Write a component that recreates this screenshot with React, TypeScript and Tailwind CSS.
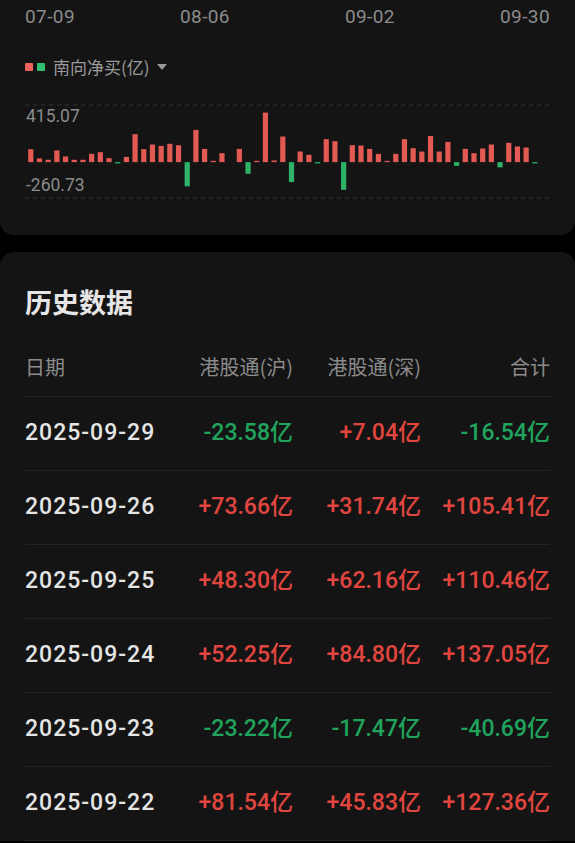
import React from "react";

const NUM_FONT = "font-['Roboto','Noto_Sans_CJK_SC',sans-serif]";

// 南向净买 daily values (亿), oldest first
const FLOWS = [
  94, 27, 17, 85, 41, 17, 17, 60, 72, 29, -7, 38, 203, 94, 128, 118, 133, 123, -176, 234,
  96, 9, 65, 0, 96, -85, 9, 360, 12, 186, -145, 77, 53, -9, 167, 152, -201, 123, 121, 96,
  60, 9, 60, 167, 101, 77, 190, 77, 147, -27, 96, 65, 99, 128, -38, 140, 114, 106, -9,
];

const MAX = 415.07;
const MIN = -260.73;

const HISTORY = [
  { date: "2025-09-29", sh: -23.58, sz: 7.04, total: -16.54 },
  { date: "2025-09-26", sh: 73.66, sz: 31.74, total: 105.41 },
  { date: "2025-09-25", sh: 48.3, sz: 62.16, total: 110.46 },
  { date: "2025-09-24", sh: 52.25, sz: 84.8, total: 137.05 },
  { date: "2025-09-23", sh: -23.22, sz: -17.47, total: -40.69 },
  { date: "2025-09-22", sh: 81.54, sz: 45.83, total: 127.36 },
];

function fmt(v: number) {
  const s = Math.abs(v).toFixed(2);
  return `${v >= 0 ? "+" : "-"}${s}亿`;
}

function FlowChart() {
  // svg coords: top grid line y=5, bottom y=98
  const top = 5;
  const bottom = 98;
  const zero = top + ((bottom - top) * MAX) / (MAX - MIN);
  const scale = (zero - top) / MAX;

  return (
    <div className="relative mt-[16px] h-[100px]">
      <svg width="525" height="100" viewBox="0 0 525 100" className="block">
        <line x1="0" x2="525" y1={top} y2={top} stroke="#333" strokeWidth="1" strokeDasharray="4 4" />
        <line x1="0" x2="525" y1={bottom} y2={bottom} stroke="#333" strokeWidth="1" strokeDasharray="4 4" />
        {FLOWS.map((v, i) => {
          if (v === 0) return null;
          const h = Math.max(1.3, Math.abs(v) * scale);
          const x = 3.2 + i * 8.69;
          return (
            <rect
              key={i}
              x={x}
              y={v > 0 ? zero - h : zero}
              width="5.2"
              height={h}
              fill={v > 0 ? "#e35954" : "#2eb268"}
            />
          );
        })}
      </svg>
      <span className={`absolute left-[1px] top-[6px] text-[17.5px] leading-[20px] text-[#8b8b8b] ${NUM_FONT}`}>
        415.07
      </span>
      <span className={`absolute left-[1px] top-[75px] text-[17.5px] leading-[20px] text-[#8b8b8b] ${NUM_FONT}`}>
        -260.73
      </span>
    </div>
  );
}

export default function App() {
  return (
    <div className="min-h-[843px] bg-black font-['Noto_Sans_CJK_SC',sans-serif]">
      {/* chart card */}
      <div className="rounded-b-[14px] bg-[#141414] px-[25px] pb-[35px]">
        <div className={`flex h-[34px] items-center text-[19px] tracking-[0.4px] text-[#8b8b8b] ${NUM_FONT}`}>
          <span>07-09</span>
          <span className="ml-[105px]">08-06</span>
          <span className="ml-[115px]">09-02</span>
          <span className="ml-auto">09-30</span>
        </div>

        <div className="mt-[16px] flex h-[34px] items-center">
          <span className="h-[8px] w-[8px] rounded-[1px] bg-[#f0625c]" />
          <span className="ml-[4px] h-[8px] w-[8px] rounded-[1px] bg-[#31c071]" />
          <span className="ml-[8px] text-[17px] text-[#9a9a9a]">南向净买(亿)</span>
          <svg width="10" height="6" viewBox="0 0 10 6" className="ml-[7px]">
            <path d="M0 0h10L5 6z" fill="#9a9a9a" />
          </svg>
        </div>

        <FlowChart />
      </div>

      {/* history card */}
      <div className="mt-[17px] rounded-t-[14px] bg-[#141414] px-[25px] pt-[30px]">
        <h2 className="h-[40px] text-[27px] font-bold leading-[40px] text-[#e6e6e6]">历史数据</h2>

        <div className="mt-[16px] grid h-[59px] grid-cols-[140px_128px_128px_1fr] items-center border-b border-[#242424] text-[20px] text-[#8b8b8b]">
          <span>日期</span>
          <span className="text-right">港股通(沪)</span>
          <span className="text-right">港股通(深)</span>
          <span className="text-right">合计</span>
        </div>

        {HISTORY.map((row) => (
          <div
            key={row.date}
            className={`grid h-[74px] grid-cols-[140px_128px_128px_1fr] items-center border-b border-[#242424] text-[23px] font-medium ${NUM_FONT}`}
          >
            <span className="tracking-[1px] text-[#e4e4e4]">{row.date}</span>
            {[row.sh, row.sz, row.total].map((v, i) => (
              <span key={i} className={`text-right ${v >= 0 ? "text-[#e0463f]" : "text-[#20a45d]"}`}>
                {fmt(v)}
              </span>
            ))}
          </div>
        ))}
      </div>
    </div>
  );
}
